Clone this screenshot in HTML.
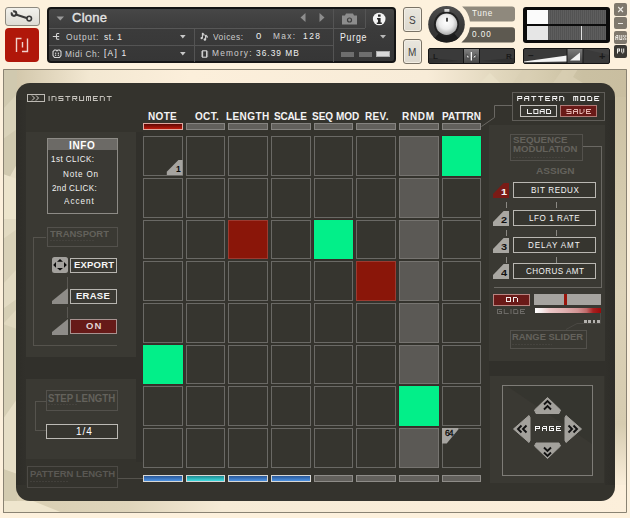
<!DOCTYPE html><html><head><meta charset="utf-8"><style>
*{margin:0;padding:0;box-sizing:border-box}
html,body{width:630px;height:518px;overflow:hidden;background:#fdf1dd;font-family:"Liberation Sans",sans-serif;position:relative}
.a{position:absolute}
.t{position:absolute;white-space:nowrap;line-height:1}
</style></head><body><div class="a" style="left:5px;top:7px;width:35px;height:19px;border:1px solid #8d897f;border-radius:3px;background:linear-gradient(#f2f1ec,#dedcd4)"></div>
<div class="a" style="left:5px;top:28px;width:34px;height:34px;border-radius:4px;background:#b0170a"></div>
<svg class="a" style="left:5px;top:6px" width="36" height="21"><path d="M10.8,8.4 L21.6,11.9" stroke="#3a3a3a" stroke-width="2.1" stroke-linecap="round"/><circle cx="9" cy="7.6" r="3.3" fill="#3a3a3a"/><circle cx="9" cy="7.6" r="1.2" fill="#e9e8e3"/><polygon points="9,7.6 5,5.6 7.2,3.2" fill="#e9e8e3"/><circle cx="24.2" cy="12.6" r="2.3" fill="none" stroke="#3a3a3a" stroke-width="1.6"/></svg>
<svg class="a" style="left:13px;top:36px" width="18" height="18"><path d="M3.5,16 V2.5 H8.5 M9.5,6 V11.5 M14.5,2.5 V15.5 H9" stroke="#f1d2cc" stroke-width="1.4" fill="none"/></svg>
<div class="a" style="left:47px;top:7px;width:349px;height:56px;background:linear-gradient(#474747,#3b3b3b 40%,#363636);border:2px solid #151515;border-radius:4px"></div>
<div class="a" style="left:49px;top:28px;width:316px;height:1px;background:#575757"></div>
<div class="a" style="left:49px;top:45px;width:284px;height:1px;background:#545454"></div>
<div class="a" style="left:194px;top:29px;width:1px;height:33px;background:#545454"></div>
<div class="a" style="left:333px;top:9px;width:1px;height:53px;background:#545454"></div>
<div class="a" style="left:365px;top:9px;width:1px;height:19px;background:#545454"></div>
<svg class="a" style="left:56px;top:16px" width="9" height="5"><polygon points="0.5,0.5 8,0.5 4.25,4.5" fill="#9a9a9a"/></svg>
<div class="t" style="left:72px;top:11px;font-family:'Liberation Sans';font-size:13px;font-weight:normal;letter-spacing:0.25px;color:#e4e4e4;-webkit-text-stroke:0.35px #e4e4e4">Clone</div>
<svg class="a" style="left:300px;top:13px" width="6" height="9"><polygon points="5.5,0 5.5,9 0.5,4.5" fill="#8d8d8d"/></svg>
<svg class="a" style="left:319px;top:13px" width="6" height="9"><polygon points="0.5,0 0.5,9 5.5,4.5" fill="#8d8d8d"/></svg>
<svg class="a" style="left:341px;top:12px" width="17" height="13"><path d="M5,1.5 h7 l1,2 h3 v9 h-15 v-9 h3 z" fill="#8c8c8c"/><circle cx="8.5" cy="8" r="2.6" fill="#3e3e3e"/><circle cx="8.5" cy="8" r="1.4" fill="#8c8c8c"/></svg>
<svg class="a" style="left:372px;top:12px" width="15" height="14"><circle cx="7.2" cy="7" r="6.3" fill="#f4f4f4"/><rect x="6" y="2.5" width="2.6" height="2.2" fill="#2a2a2a"/><path d="M5,6 h3.6 v4.6 h1.2 v1.4 h-5 v-1.4 h1.2 v-3.2 h-1 z" fill="#2a2a2a"/></svg>
<svg class="a" style="left:52px;top:32px" width="9" height="9"><path d="M0.8,4.5 H7.2 M7.2,1.5 H5.3 Q4.5,1.5 4.5,2.5 V6.3 Q4.5,7.3 5.3,7.3 H7.2" stroke="#d4d4d4" stroke-width="1.1" fill="none"/></svg>
<div class="t" style="left:66px;top:32px;font-family:'Liberation Sans';font-size:9.5px;font-weight:normal;letter-spacing:0.95px;color:#cdcdcd;transform-origin:0 0;transform:scaleX(0.88);">Output:</div>
<div class="t" style="left:104px;top:32px;font-family:'Liberation Sans';font-size:9.5px;font-weight:normal;letter-spacing:0.57px;color:#f0f0f0;transform-origin:0 0;transform:scaleX(0.88);">st. 1</div>
<svg class="a" style="left:180px;top:35px" width="7" height="5"><polygon points="0,0 5.6,0 2.8,3.4" fill="#c8c8c8"/></svg>
<svg class="a" style="left:52px;top:49px" width="10" height="10"><path d="M2.5,1 H4 L5,2 L6,1 H7.5 L9,2.5 V6.5 L7.5,8.5 H2.5 L1,6.5 V2.5 Z" stroke="#d4d4d4" stroke-width="1.1" fill="none"/><circle cx="3.6" cy="4.2" r="0.75" fill="#d4d4d4"/><circle cx="6.4" cy="4.2" r="0.75" fill="#d4d4d4"/><circle cx="3.6" cy="6.3" r="0.75" fill="#d4d4d4"/><circle cx="6.4" cy="6.3" r="0.75" fill="#d4d4d4"/></svg>
<div class="t" style="left:65px;top:49px;font-family:'Liberation Sans';font-size:9.5px;font-weight:normal;letter-spacing:0.65px;color:#cdcdcd;transform-origin:0 0;transform:scaleX(0.88);">Midi Ch:</div>
<div class="t" style="left:104px;top:48px;font-family:'Liberation Sans';font-size:9.5px;font-weight:normal;letter-spacing:1.42px;color:#f0f0f0;transform-origin:0 0;transform:scaleX(0.88);">[A] 1</div>
<svg class="a" style="left:180px;top:52px" width="7" height="5"><polygon points="0,0 5.6,0 2.8,3.4" fill="#c8c8c8"/></svg>
<svg class="a" style="left:200px;top:32px" width="10" height="10"><path d="M2.4,1 V6 M2.4,1 L4,2.6 V3.8 M5.6,3 V7.5 M5.6,3 L7.2,4.6 V5.8" stroke="#d4d4d4" stroke-width="1.1" fill="none"/><circle cx="1.7" cy="6.1" r="1.2" fill="#d4d4d4"/><circle cx="4.9" cy="7.5" r="1.2" fill="#d4d4d4"/></svg>
<div class="t" style="left:213px;top:32px;font-family:'Liberation Sans';font-size:9.5px;font-weight:normal;letter-spacing:0.57px;color:#cdcdcd;transform-origin:0 0;transform:scaleX(0.88);">Voices:</div>
<div class="t" style="left:256px;top:31px;font-family:'Liberation Sans';font-size:9.5px;font-weight:normal;letter-spacing:0px;color:#f0f0f0;">0</div>
<div class="t" style="left:273px;top:31px;font-family:'Liberation Sans';font-size:9.5px;font-weight:normal;letter-spacing:1.52px;color:#cdcdcd;transform-origin:0 0;transform:scaleX(0.88);">Max:</div>
<div class="t" style="left:303px;top:31px;font-family:'Liberation Sans';font-size:9.5px;font-weight:normal;letter-spacing:1.7px;color:#f0f0f0;transform-origin:0 0;transform:scaleX(0.88);">128</div>
<svg class="a" style="left:200px;top:49px" width="10" height="10"><rect x="2.6" y="1.8" width="4" height="6.4" stroke="#d4d4d4" stroke-width="1.1" fill="none"/><path d="M1,3 H2.6 M1,5 H2.6 M1,7 H2.6 M6.6,3 H8.2 M6.6,5 H8.2 M6.6,7 H8.2" stroke="#d4d4d4" stroke-width="1"/></svg>
<div class="t" style="left:212px;top:48px;font-family:'Liberation Sans';font-size:9.5px;font-weight:normal;letter-spacing:1.33px;color:#cdcdcd;transform-origin:0 0;transform:scaleX(0.88);">Memory:</div>
<div class="t" style="left:256px;top:48px;font-family:'Liberation Sans';font-size:9.5px;font-weight:normal;letter-spacing:1.14px;color:#f0f0f0;transform-origin:0 0;transform:scaleX(0.88);">36.39 MB</div>
<div class="t" style="left:340px;top:33px;font-family:'Liberation Sans';font-size:10px;font-weight:normal;letter-spacing:0.85px;color:#f0f0f0;transform-origin:0 0;transform:scaleX(0.88);">Purge</div>
<svg class="a" style="left:380px;top:35px" width="7" height="5"><polygon points="0,0 6,0 3,3.6" fill="#b8b8b8"/></svg>
<div class="a" style="left:341px;top:52px;width:13px;height:5px;background:#6e6e6e"></div>
<div class="a" style="left:359px;top:52px;width:13px;height:5px;background:#6e6e6e"></div>
<div class="a" style="left:376px;top:51px;width:14px;height:6px;background:#d8d8d8;border:1px solid #aaa"></div>
<div class="a" style="left:403px;top:7px;width:19px;height:25px;border:1px solid #7a7366;border-radius:3px;box-shadow:inset 0 0 0 1px #f4efe4;background:linear-gradient(#e9e6de,#dcd8ce)"></div>
<div class="t" style="left:409px;top:16px;font-family:'Liberation Sans';font-size:10px;font-weight:normal;letter-spacing:1.0px;color:#3e3e3e;">S</div>
<div class="a" style="left:403px;top:39px;width:19px;height:25px;border:1px solid #7a7366;border-radius:3px;box-shadow:inset 0 0 0 1px #f4efe4;background:linear-gradient(#e9e6de,#dcd8ce)"></div>
<div class="t" style="left:408px;top:48px;font-family:'Liberation Sans';font-size:10px;font-weight:normal;letter-spacing:1.0px;color:#3e3e3e;">M</div>
<svg class="a" style="left:427px;top:5px" width="40" height="40"><defs><radialGradient id="kg" cx="48%" cy="40%" r="60%"><stop offset="0" stop-color="#ffffff"/><stop offset="0.55" stop-color="#ececec"/><stop offset="1" stop-color="#a9a9a9"/></radialGradient><linearGradient id="kr" x1="0" y1="0" x2="0" y2="1"><stop offset="0" stop-color="#4e4e4e"/><stop offset="0.5" stop-color="#3a3a3a"/><stop offset="1" stop-color="#303030"/></linearGradient><linearGradient id="kh" x1="0" y1="0" x2="0" y2="1"><stop offset="0" stop-color="#f4f4f4"/><stop offset="1" stop-color="#bdbdbd"/></linearGradient></defs><circle cx="19.5" cy="19.2" r="18.3" fill="url(#kr)"/><path d="M19.5,19.2 L7.7,33.2 A18.3,18.3 0 0 0 31.3,33.2 Z" fill="#1c1c1c"/><circle cx="19.5" cy="19.2" r="12.6" fill="#222"/><circle cx="19.6" cy="19.3" r="10.7" fill="url(#kg)"/><rect x="17.4" y="4.1" width="5" height="2.8" fill="url(#kh)"/><rect x="19" y="12.8" width="2" height="3.8" fill="#4a4a4a"/></svg>
<svg class="a" style="left:460px;top:6px" width="56" height="37"><path d="M2.1,0.5 H52 Q55,0.5 55,3.5 V12.5 Q55,15.5 52,15.5 H9.95 A23.6,23.6 0 0 0 2.1,0.5 Z" fill="#8f897d"/><path d="M9.9,21.3 H52 Q55,21.3 55,24.3 V33.5 Q55,36.5 52,36.5 H1.4 A23.6,23.6 0 0 0 9.9,21.3 Z" fill="#5d5950"/></svg>
<div class="t" style="left:472px;top:8px;font-family:'Liberation Sans';font-size:9.6px;font-weight:normal;letter-spacing:0.78px;color:#f6f4ee;transform-origin:0 0;transform:scaleX(0.85);">Tune</div>
<div class="t" style="left:472px;top:29px;font-family:'Liberation Sans';font-size:9.6px;font-weight:normal;letter-spacing:1.18px;color:#f6f4ee;transform-origin:0 0;transform:scaleX(0.85);">0.00</div>
<div class="a" style="left:428px;top:48px;width:87px;height:16px;background:#3a3a3a;border:1px solid #151515;border-radius:2px"></div>
<svg class="a" style="left:429px;top:49px" width="85" height="14"><defs><linearGradient id="ph" x1="0" y1="0" x2="0" y2="1"><stop offset="0" stop-color="#808080"/><stop offset="1" stop-color="#474747"/></linearGradient></defs><polygon points="0,9 34,12 0,14" fill="#2c2c2c" opacity="0.7"/><polygon points="85,9 51,12 85,14" fill="#2c2c2c" opacity="0.7"/><rect x="34" y="0" width="17" height="14" fill="#151515"/><rect x="35" y="0" width="15" height="14" fill="url(#ph)"/><path d="M37.7,5.4 V8.8 H41.2 Z M46.8,5.4 V8.8 H43.3 Z" fill="#f4f4f4" stroke="#222" stroke-width="0.6"/><rect x="41.7" y="3" width="1.3" height="8.5" fill="#f4f4f4"/></svg>
<div class="t" style="left:433px;top:53px;font-size:8px;color:#1a1a1a;font-weight:bold">L</div>
<div class="t" style="left:506px;top:53px;font-size:8px;color:#1a1a1a;font-weight:bold">R</div>
<div class="a" style="left:523px;top:7px;width:87px;height:36px;background:#0c0c0c;border-radius:3px"></div>
<div class="a" style="left:527px;top:10px;width:79px;height:14px;background:repeating-linear-gradient(90deg,#5e5e5e 0 1px,#535353 1px 2px)"></div>
<div class="a" style="left:527px;top:26px;width:79px;height:14px;background:repeating-linear-gradient(90deg,#5e5e5e 0 1px,#535353 1px 2px)"></div>
<div class="a" style="left:527px;top:10px;width:21px;height:14px;background:#fbfbfb"></div>
<div class="a" style="left:527px;top:26px;width:21px;height:14px;background:#e6e6e6"></div>
<div class="a" style="left:581px;top:26px;width:1px;height:14px;background:#e0e0e0"></div>
<div class="a" style="left:523px;top:48px;width:87px;height:16px;background:#3a3a3a;border:1px solid #151515;border-radius:2px"></div>
<svg class="a" style="left:524px;top:49px" width="85" height="14"><defs><linearGradient id="vh" x1="0" y1="0" x2="0" y2="1"><stop offset="0" stop-color="#7c7c7c"/><stop offset="1" stop-color="#474747"/></linearGradient></defs><polygon points="0,12.5 43,6.5 43,12.5 0,13.2" fill="#f4f4f4"/><rect x="42.5" y="0" width="17" height="14" fill="#161616"/><rect x="43.5" y="0" width="15" height="14" fill="url(#vh)"/><polygon points="46,11.5 56,3.5 56,11.5" fill="#f2f2f2"/><polygon points="59.5,0 85,0 85,6" fill="#4a4a4a" opacity="0.5"/></svg>
<div class="t" style="left:528px;top:51px;font-size:10px;color:#1a1a1a;font-weight:bold">&#8211;</div>
<div class="t" style="left:599px;top:51px;font-size:11px;color:#1a1a1a;font-weight:bold">+</div>
<div class="a" style="left:614px;top:3px;width:13px;height:13px;background:#7f786c;border-radius:2px"><svg class="a" style="left:0;top:0" width="13" height="13"><path d="M4.2,4 L9,9 M9,4 L4.2,9" stroke="#ebe8e2" stroke-width="1.1"/></svg></div>
<div class="a" style="left:614px;top:17px;width:13px;height:12px;background:#7f786c;border-radius:2px"><div class="a" style="left:4px;top:6px;width:5px;height:1px;background:#ebe8e2"></div></div>
<div class="a" style="left:614px;top:31px;width:13px;height:13px;background:#7f786c;border-radius:2px"></div>
<svg class="a" style="left:0;top:0;overflow:visible" width="1" height="1"><path d="M616.30,35.00h2.00v1.00h-2.00zM615.30,36.00h1.00v1.00h-1.00zM617.30,36.00h1.00v1.00h-1.00zM615.30,37.00h3.00v1.00h-3.00zM615.30,38.00h1.00v1.00h-1.00zM617.30,38.00h1.00v1.00h-1.00zM615.30,39.00h1.00v1.00h-1.00zM617.30,39.00h1.00v1.00h-1.00zM619.30,35.00h1.00v1.00h-1.00zM621.30,35.00h1.00v1.00h-1.00zM619.30,36.00h1.00v1.00h-1.00zM621.30,36.00h1.00v1.00h-1.00zM619.30,37.00h1.00v1.00h-1.00zM621.30,37.00h1.00v1.00h-1.00zM619.30,38.00h1.00v1.00h-1.00zM621.30,38.00h1.00v1.00h-1.00zM619.30,39.00h3.00v1.00h-3.00zM623.30,35.00h1.00v1.00h-1.00zM625.30,35.00h1.00v1.00h-1.00zM623.30,36.00h1.00v1.00h-1.00zM625.30,36.00h1.00v1.00h-1.00zM624.30,37.00h1.00v1.00h-1.00zM623.30,38.00h1.00v1.00h-1.00zM625.30,38.00h1.00v1.00h-1.00zM623.30,39.00h1.00v1.00h-1.00zM625.30,39.00h1.00v1.00h-1.00z" fill="#ebe8e2" opacity="1.0"/></svg>
<div class="a" style="left:614px;top:45px;width:13px;height:13px;background:#3b3934;border-radius:2px"></div>
<svg class="a" style="left:0;top:0;overflow:visible" width="1" height="1"><path d="M617.00,48.50h3.00v1.00h-3.00zM617.00,49.50h1.00v1.00h-1.00zM619.00,49.50h1.00v1.00h-1.00zM617.00,50.50h3.00v1.00h-3.00zM617.00,51.50h1.00v1.00h-1.00zM617.00,52.50h1.00v1.00h-1.00zM621.20,48.50h1.00v1.00h-1.00zM623.20,48.50h1.00v1.00h-1.00zM621.20,49.50h1.00v1.00h-1.00zM623.20,49.50h1.00v1.00h-1.00zM621.20,50.50h1.00v1.00h-1.00zM623.20,50.50h1.00v1.00h-1.00zM621.20,51.50h1.00v1.00h-1.00zM623.20,51.50h1.00v1.00h-1.00zM622.20,52.50h1.00v1.00h-1.00z" fill="#f2f0ea" opacity="1.0"/></svg>
<svg class="a" style="left:3px;top:69px" width="624" height="444"><defs><linearGradient id="ft" x1="0" y1="0" x2="624" y2="0" gradientUnits="userSpaceOnUse"><stop offset="0" stop-color="#cdc2a5"/><stop offset="0.14" stop-color="#f3e8d2"/><stop offset="0.3" stop-color="#fcefdb"/><stop offset="0.68" stop-color="#f8ecd8"/><stop offset="0.8" stop-color="#e0d6bc"/><stop offset="0.88" stop-color="#d3c9ac"/><stop offset="0.93" stop-color="#cac0a2"/><stop offset="1" stop-color="#c9bea0"/></linearGradient><linearGradient id="fr" x1="0" y1="0" x2="0" y2="1"><stop offset="0" stop-color="#c9bea0"/><stop offset="0.25" stop-color="#d3c9ac"/><stop offset="0.5" stop-color="#dcd2b7"/><stop offset="0.8" stop-color="#d6ccb0"/><stop offset="0.93" stop-color="#f8ecd8"/><stop offset="1" stop-color="#fcefdb"/></linearGradient><linearGradient id="fb" x1="0" y1="0" x2="1" y2="0"><stop offset="0" stop-color="#d8ceb2"/><stop offset="0.2" stop-color="#dfd5bb"/><stop offset="0.35" stop-color="#f6ebd6"/><stop offset="1" stop-color="#fcefdb"/></linearGradient></defs><rect x="0" y="0" width="624" height="444" fill="#fcefdb"/><rect x="0" y="0" width="28" height="444" fill="#d6cfb6"/><rect x="596" y="0" width="28" height="444" fill="url(#fr)"/><rect x="0" y="0" width="624" height="28" fill="url(#ft)"/><rect x="0" y="416" width="624" height="28" fill="url(#fb)"/><polygon points="0,0 14,0 14,140 0,120" fill="#d0c9af"/><polygon points="0,40 14,25 14,60 0,70" fill="#d9d2b9"/><polygon points="0,120 14,95 14,150 0,160" fill="#e6dec6"/><polygon points="0,105 14,110 14,150 0,150" fill="#ece4cc"/><polygon points="0,150 14,150 14,230 0,240" fill="#e2dac2"/><polygon points="0,170 14,160 14,200 0,215" fill="#d9d1b8"/><polygon points="0,240 14,230 14,330 0,350" fill="#d6cfb5"/><polygon points="0,255 14,240 14,260" fill="#e0d8bf"/><polygon points="0,350 14,330 14,405 0,400" fill="#e6dec6"/><polygon points="0,400 14,405 14,432 0,432" fill="#d3cbb0"/><polygon points="0,432 30,432 60,444 0,444" fill="#efe6ce"/><polygon points="477,14 487,4 497,14" fill="#e9e0c7" opacity="0.8"/><polygon points="510,14 520,0 530,0 518,14" fill="#d9cfb4" opacity="0.7"/><polygon points="550,14 560,0 575,0 570,8 580,14" fill="#d8ceb3" opacity="0.8"/><path d="M0.5,444 V0.5 H623.5 V443.5 H0" stroke="#8a8373" stroke-width="1" fill="none"/></svg>
<div class="a" style="left:16px;top:83px;width:599px;height:418px;border-radius:14px;background:#34332d"></div>
<div class="a" style="left:16px;top:100px;width:10px;height:385px;background:linear-gradient(90deg,#2e2d28,#31302b)"></div>
<div class="a" style="left:605px;top:100px;width:10px;height:385px;background:linear-gradient(90deg,#31302b,#2e2d28)"></div>
<div class="a" style="left:26px;top:357px;width:110px;height:22px;background:#31302b"></div>
<div class="a" style="left:136px;top:132px;width:7px;height:330px;background:#31302b"></div>
<div class="a" style="left:489px;top:361px;width:116px;height:15px;background:#31302b"></div>
<div class="a" style="left:27px;top:94px;width:18px;height:8px;border:1px solid #bdbab4"></div>
<svg class="a" style="left:31px;top:95px" width="12" height="6"><path d="M1,0.5 L3.5,3 L1,5.5 M5,0.5 L7.5,3 L5,5.5" stroke="#d0cdc7" stroke-width="1" fill="none"/></svg>
<svg class="a" style="left:0;top:0;overflow:visible" width="1" height="1"><path d="M48.60,96.00h1.00v1.00h-1.00zM48.60,97.00h1.00v1.00h-1.00zM48.60,98.00h1.00v1.00h-1.00zM48.60,99.00h1.00v1.00h-1.00zM48.60,100.00h1.00v1.00h-1.00zM51.50,96.00h4.00v1.00h-4.00zM51.50,97.00h1.00v1.00h-1.00zM55.50,97.00h1.00v1.00h-1.00zM51.50,98.00h1.00v1.00h-1.00zM55.50,98.00h1.00v1.00h-1.00zM51.50,99.00h1.00v1.00h-1.00zM55.50,99.00h1.00v1.00h-1.00zM51.50,100.00h1.00v1.00h-1.00zM55.50,100.00h1.00v1.00h-1.00zM58.40,96.00h5.00v1.00h-5.00zM58.40,97.00h1.00v1.00h-1.00zM58.40,98.00h5.00v1.00h-5.00zM62.40,99.00h1.00v1.00h-1.00zM58.40,100.00h5.00v1.00h-5.00zM65.30,96.00h5.00v1.00h-5.00zM67.30,97.00h1.00v1.00h-1.00zM67.30,98.00h1.00v1.00h-1.00zM67.30,99.00h1.00v1.00h-1.00zM67.30,100.00h1.00v1.00h-1.00zM72.20,96.00h5.00v1.00h-5.00zM72.20,97.00h1.00v1.00h-1.00zM76.20,97.00h1.00v1.00h-1.00zM72.20,98.00h5.00v1.00h-5.00zM72.20,99.00h1.00v1.00h-1.00zM75.20,99.00h1.00v1.00h-1.00zM72.20,100.00h1.00v1.00h-1.00zM76.20,100.00h1.00v1.00h-1.00zM79.10,96.00h1.00v1.00h-1.00zM83.10,96.00h1.00v1.00h-1.00zM79.10,97.00h1.00v1.00h-1.00zM83.10,97.00h1.00v1.00h-1.00zM79.10,98.00h1.00v1.00h-1.00zM83.10,98.00h1.00v1.00h-1.00zM79.10,99.00h1.00v1.00h-1.00zM83.10,99.00h1.00v1.00h-1.00zM79.10,100.00h5.00v1.00h-5.00zM86.00,96.00h5.00v1.00h-5.00zM86.00,97.00h1.00v1.00h-1.00zM88.00,97.00h1.00v1.00h-1.00zM90.00,97.00h1.00v1.00h-1.00zM86.00,98.00h1.00v1.00h-1.00zM88.00,98.00h1.00v1.00h-1.00zM90.00,98.00h1.00v1.00h-1.00zM86.00,99.00h1.00v1.00h-1.00zM88.00,99.00h1.00v1.00h-1.00zM90.00,99.00h1.00v1.00h-1.00zM86.00,100.00h1.00v1.00h-1.00zM88.00,100.00h1.00v1.00h-1.00zM90.00,100.00h1.00v1.00h-1.00zM92.90,96.00h5.00v1.00h-5.00zM92.90,97.00h1.00v1.00h-1.00zM92.90,98.00h4.00v1.00h-4.00zM92.90,99.00h1.00v1.00h-1.00zM92.90,100.00h5.00v1.00h-5.00zM99.80,96.00h4.00v1.00h-4.00zM99.80,97.00h1.00v1.00h-1.00zM103.80,97.00h1.00v1.00h-1.00zM99.80,98.00h1.00v1.00h-1.00zM103.80,98.00h1.00v1.00h-1.00zM99.80,99.00h1.00v1.00h-1.00zM103.80,99.00h1.00v1.00h-1.00zM99.80,100.00h1.00v1.00h-1.00zM103.80,100.00h1.00v1.00h-1.00zM106.70,96.00h5.00v1.00h-5.00zM108.70,97.00h1.00v1.00h-1.00zM108.70,98.00h1.00v1.00h-1.00zM108.70,99.00h1.00v1.00h-1.00zM108.70,100.00h1.00v1.00h-1.00z" fill="#c4c1bb" opacity="1.0"/></svg>
<div class="a" style="left:26px;top:132px;width:110px;height:225px;background:#3a3933"></div>
<div class="a" style="left:26px;top:379px;width:110px;height:80px;background:#3a3933"></div>
<div class="a" style="left:47px;top:138px;width:71px;height:76px;border:1px solid #8d8b86;background:#3a3934"></div>
<div class="a" style="left:48px;top:139px;width:69px;height:11px;background:#6c6a66"></div>
<div class="t" style="left:69px;top:141px;font-family:'Liberation Sans';font-size:10px;font-weight:bold;letter-spacing:0.67px;color:#fff;">INFO</div>
<div class="t" style="left:51px;top:154px;font-family:'Liberation Sans';font-size:9.5px;font-weight:normal;letter-spacing:0.52px;color:#f2f2f2;transform-origin:0 0;transform:scaleX(0.85);">1st CLICK:</div>
<div class="t" style="left:63px;top:169px;font-family:'Liberation Sans';font-size:9.5px;font-weight:normal;letter-spacing:0.98px;color:#f2f2f2;transform-origin:0 0;transform:scaleX(0.85);">Note On</div>
<div class="t" style="left:52px;top:183px;font-family:'Liberation Sans';font-size:9.5px;font-weight:normal;letter-spacing:0.39px;color:#f2f2f2;transform-origin:0 0;transform:scaleX(0.85);">2nd CLICK:</div>
<div class="t" style="left:64px;top:196px;font-family:'Liberation Sans';font-size:9.5px;font-weight:normal;letter-spacing:1.18px;color:#f2f2f2;transform-origin:0 0;transform:scaleX(0.85);">Accent</div>
<div class="a" style="left:47px;top:227px;width:71px;height:20px;border:1px solid #53514c"></div>
<div class="t" style="left:50px;top:229px;font-family:'Liberation Sans';font-size:9.8px;font-weight:bold;letter-spacing:0px;color:#63615b;transform-origin:0 0;transform:scaleX(0.967);">TRANSPORT</div>
<div class="a" style="left:50px;top:240px;width:44px;height:1px;background:repeating-linear-gradient(90deg,#45433e 0 2px,transparent 2px 3px)"></div>
<div class="a" style="left:33px;top:237px;width:1px;height:109px;background:#55534d"></div>
<div class="a" style="left:33px;top:237px;width:13px;height:1px;background:#55534d"></div>
<div class="a" style="left:33px;top:345px;width:84px;height:1px;background:#55534d"></div>
<div class="a" style="left:52px;top:257px;width:16px;height:16px;background:#a3a19d;border-radius:2.5px"><svg class="a" style="left:0;top:0" width="16" height="16"><polygon points="8,2 11,4.8 5,4.8" fill="#0a0a0a"/><polygon points="8,13.6 11,10.9 5,10.9" fill="#0a0a0a"/><polygon points="1.2,7.9 4,5 4,10.8" fill="#0a0a0a"/><polygon points="14.8,7.9 12,5 12,10.8" fill="#0a0a0a"/></svg></div>
<div class="a" style="left:70px;top:258px;width:47px;height:15px;border:1px solid #b7b5b0"></div>
<div class="t" style="left:74px;top:260px;font-family:'Liberation Sans';font-size:9.5px;font-weight:bold;letter-spacing:0.2px;color:#f6f6f6;">EXPORT</div>
<div class="a" style="left:67px;top:277px;width:1px;height:11px;background:#5a5853"></div>
<svg class="a" style="left:52px;top:288px" width="16" height="16"><polygon points="16,0 16,16 0,16 0,13" fill="#8e8c88"/></svg>
<div class="a" style="left:70px;top:289px;width:47px;height:15px;border:1px solid #b7b5b0"></div>
<div class="t" style="left:76px;top:291px;font-family:'Liberation Sans';font-size:9.5px;font-weight:bold;letter-spacing:0.25px;color:#f6f6f6;">ERASE</div>
<div class="a" style="left:67px;top:307px;width:1px;height:11px;background:#5a5853"></div>
<svg class="a" style="left:52px;top:319px" width="16" height="16"><polygon points="16,0 16,16 0,16 0,13" fill="#8e8c88"/></svg>
<div class="a" style="left:70px;top:319px;width:47px;height:15px;border:1px solid #a89290;background:#661a18"></div>
<div class="t" style="left:86px;top:321px;font-family:'Liberation Sans';font-size:9.5px;font-weight:bold;letter-spacing:1.0px;color:#e0d4d2;">ON</div>
<div class="a" style="left:46px;top:390px;width:72px;height:21px;border:1px solid #53514c"></div>
<div class="t" style="left:48px;top:394px;font-family:'Liberation Sans';font-size:10.2px;font-weight:bold;letter-spacing:0px;color:#64625c;transform-origin:0 0;transform:scaleX(0.944);">STEP LENGTH</div>
<div class="a" style="left:48px;top:404px;width:30px;height:1px;background:repeating-linear-gradient(90deg,#45433e 0 2px,transparent 2px 3px)"></div>
<div class="a" style="left:35px;top:401px;width:1px;height:30px;background:#55534d"></div>
<div class="a" style="left:35px;top:401px;width:11px;height:1px;background:#55534d"></div>
<div class="a" style="left:35px;top:430px;width:11px;height:1px;background:#55534d"></div>
<div class="a" style="left:46px;top:424px;width:72px;height:15px;border:1px solid #bcbab5;background:#36352f"></div>
<div class="t" style="left:76px;top:427px;font-family:'Liberation Sans';font-size:10px;font-weight:normal;letter-spacing:1.0px;color:#fff;">1/4</div>
<div class="a" style="left:27px;top:466px;width:91px;height:22px;border:1px solid #4c4a45"></div>
<div class="t" style="left:30px;top:469px;font-family:'Liberation Sans';font-size:9.5px;font-weight:bold;letter-spacing:0px;color:#5a5853;">PATTERN LENGTH</div>
<div class="a" style="left:30px;top:481px;width:39px;height:1px;background:repeating-linear-gradient(90deg,#42403b 0 2px,transparent 2px 3px)"></div>
<div class="a" style="left:118px;top:478px;width:25px;height:1px;background:#55534d"></div>
<div class="a" style="left:143px;top:123px;width:40px;height:7px;border:1px solid #e0a8a0;background:linear-gradient(#5e0805,#c01a0c)"></div>
<div class="a" style="left:143px;top:475px;width:40px;height:7px;border:1px solid #d8d8d6;background:linear-gradient(#2a5898,#4d92e2)"></div>
<div class="a" style="left:186px;top:123px;width:39px;height:7px;border:1px solid #858380;background:#62605c"></div>
<div class="a" style="left:186px;top:475px;width:39px;height:7px;border:1px solid #d8d8d6;background:linear-gradient(#1f8a92,#40dde0)"></div>
<div class="a" style="left:228px;top:123px;width:40px;height:7px;border:1px solid #858380;background:#62605c"></div>
<div class="a" style="left:228px;top:475px;width:40px;height:7px;border:1px solid #d8d8d6;background:linear-gradient(#2a5898,#4d92e2)"></div>
<div class="a" style="left:271px;top:123px;width:40px;height:7px;border:1px solid #858380;background:#62605c"></div>
<div class="a" style="left:271px;top:475px;width:40px;height:7px;border:1px solid #d8d8d6;background:linear-gradient(#2a5898,#4d92e2)"></div>
<div class="a" style="left:314px;top:123px;width:39px;height:7px;border:1px solid #858380;background:#62605c"></div>
<div class="a" style="left:314px;top:475px;width:39px;height:7px;border:1px solid #8e8c88;background:#62605c"></div>
<div class="a" style="left:356px;top:123px;width:40px;height:7px;border:1px solid #858380;background:#62605c"></div>
<div class="a" style="left:356px;top:475px;width:40px;height:7px;border:1px solid #8e8c88;background:#62605c"></div>
<div class="a" style="left:399px;top:123px;width:40px;height:7px;border:1px solid #858380;background:#62605c"></div>
<div class="a" style="left:399px;top:475px;width:40px;height:7px;border:1px solid #8e8c88;background:#62605c"></div>
<div class="a" style="left:442px;top:123px;width:39px;height:7px;border:1px solid #858380;background:#62605c"></div>
<div class="a" style="left:442px;top:475px;width:39px;height:7px;border:1px solid #8e8c88;background:#62605c"></div>
<div class="a" style="left:143px;top:136px;width:40px;height:40px;border:1px solid #6a6965;background:#36352f"></div>
<div class="a" style="left:143px;top:178px;width:40px;height:40px;border:1px solid #6a6965;background:#36352f"></div>
<div class="a" style="left:143px;top:220px;width:40px;height:39px;border:1px solid #6a6965;background:#36352f"></div>
<div class="a" style="left:143px;top:261px;width:40px;height:40px;border:1px solid #6a6965;background:#36352f"></div>
<div class="a" style="left:143px;top:303px;width:40px;height:40px;border:1px solid #6a6965;background:#36352f"></div>
<div class="a" style="left:143px;top:345px;width:40px;height:39px;background:#02ef89;box-shadow:0 0 0 1px #3a2a28"></div>
<div class="a" style="left:143px;top:386px;width:40px;height:40px;border:1px solid #6a6965;background:#36352f"></div>
<div class="a" style="left:143px;top:428px;width:40px;height:40px;border:1px solid #6a6965;background:#36352f"></div>
<div class="a" style="left:186px;top:136px;width:39px;height:40px;border:1px solid #6a6965;background:#36352f"></div>
<div class="a" style="left:186px;top:178px;width:39px;height:40px;border:1px solid #6a6965;background:#36352f"></div>
<div class="a" style="left:186px;top:220px;width:39px;height:39px;border:1px solid #6a6965;background:#36352f"></div>
<div class="a" style="left:186px;top:261px;width:39px;height:40px;border:1px solid #6a6965;background:#36352f"></div>
<div class="a" style="left:186px;top:303px;width:39px;height:40px;border:1px solid #6a6965;background:#36352f"></div>
<div class="a" style="left:186px;top:345px;width:39px;height:39px;border:1px solid #6a6965;background:#36352f"></div>
<div class="a" style="left:186px;top:386px;width:39px;height:40px;border:1px solid #6a6965;background:#36352f"></div>
<div class="a" style="left:186px;top:428px;width:39px;height:40px;border:1px solid #6a6965;background:#36352f"></div>
<div class="a" style="left:228px;top:136px;width:40px;height:40px;border:1px solid #6a6965;background:#36352f"></div>
<div class="a" style="left:228px;top:178px;width:40px;height:40px;border:1px solid #6a6965;background:#36352f"></div>
<div class="a" style="left:228px;top:220px;width:40px;height:39px;background:#8a1609;border:1px solid #9c3a30"></div>
<div class="a" style="left:228px;top:261px;width:40px;height:40px;border:1px solid #6a6965;background:#36352f"></div>
<div class="a" style="left:228px;top:303px;width:40px;height:40px;border:1px solid #6a6965;background:#36352f"></div>
<div class="a" style="left:228px;top:345px;width:40px;height:39px;border:1px solid #6a6965;background:#36352f"></div>
<div class="a" style="left:228px;top:386px;width:40px;height:40px;border:1px solid #6a6965;background:#36352f"></div>
<div class="a" style="left:228px;top:428px;width:40px;height:40px;border:1px solid #6a6965;background:#36352f"></div>
<div class="a" style="left:271px;top:136px;width:40px;height:40px;border:1px solid #6a6965;background:#36352f"></div>
<div class="a" style="left:271px;top:178px;width:40px;height:40px;border:1px solid #6a6965;background:#36352f"></div>
<div class="a" style="left:271px;top:220px;width:40px;height:39px;border:1px solid #6a6965;background:#36352f"></div>
<div class="a" style="left:271px;top:261px;width:40px;height:40px;border:1px solid #6a6965;background:#36352f"></div>
<div class="a" style="left:271px;top:303px;width:40px;height:40px;border:1px solid #6a6965;background:#36352f"></div>
<div class="a" style="left:271px;top:345px;width:40px;height:39px;border:1px solid #6a6965;background:#36352f"></div>
<div class="a" style="left:271px;top:386px;width:40px;height:40px;border:1px solid #6a6965;background:#36352f"></div>
<div class="a" style="left:271px;top:428px;width:40px;height:40px;border:1px solid #6a6965;background:#36352f"></div>
<div class="a" style="left:314px;top:136px;width:39px;height:40px;border:1px solid #6a6965;background:#36352f"></div>
<div class="a" style="left:314px;top:178px;width:39px;height:40px;border:1px solid #6a6965;background:#36352f"></div>
<div class="a" style="left:314px;top:220px;width:39px;height:39px;background:#02ef89;box-shadow:0 0 0 1px #3a2a28"></div>
<div class="a" style="left:314px;top:261px;width:39px;height:40px;border:1px solid #6a6965;background:#36352f"></div>
<div class="a" style="left:314px;top:303px;width:39px;height:40px;border:1px solid #6a6965;background:#36352f"></div>
<div class="a" style="left:314px;top:345px;width:39px;height:39px;border:1px solid #6a6965;background:#36352f"></div>
<div class="a" style="left:314px;top:386px;width:39px;height:40px;border:1px solid #6a6965;background:#36352f"></div>
<div class="a" style="left:314px;top:428px;width:39px;height:40px;border:1px solid #6a6965;background:#36352f"></div>
<div class="a" style="left:356px;top:136px;width:40px;height:40px;border:1px solid #6a6965;background:#36352f"></div>
<div class="a" style="left:356px;top:178px;width:40px;height:40px;border:1px solid #6a6965;background:#36352f"></div>
<div class="a" style="left:356px;top:220px;width:40px;height:39px;border:1px solid #6a6965;background:#36352f"></div>
<div class="a" style="left:356px;top:261px;width:40px;height:40px;background:#8a1609;border:1px solid #9c3a30"></div>
<div class="a" style="left:356px;top:303px;width:40px;height:40px;border:1px solid #6a6965;background:#36352f"></div>
<div class="a" style="left:356px;top:345px;width:40px;height:39px;border:1px solid #6a6965;background:#36352f"></div>
<div class="a" style="left:356px;top:386px;width:40px;height:40px;border:1px solid #6a6965;background:#36352f"></div>
<div class="a" style="left:356px;top:428px;width:40px;height:40px;border:1px solid #6a6965;background:#36352f"></div>
<div class="a" style="left:399px;top:136px;width:40px;height:40px;background:#5b5955;border:1px solid #767470"></div>
<div class="a" style="left:399px;top:178px;width:40px;height:40px;background:#5b5955;border:1px solid #767470"></div>
<div class="a" style="left:399px;top:220px;width:40px;height:39px;background:#5b5955;border:1px solid #767470"></div>
<div class="a" style="left:399px;top:261px;width:40px;height:40px;background:#5b5955;border:1px solid #767470"></div>
<div class="a" style="left:399px;top:303px;width:40px;height:40px;background:#5b5955;border:1px solid #767470"></div>
<div class="a" style="left:399px;top:345px;width:40px;height:39px;background:#5b5955;border:1px solid #767470"></div>
<div class="a" style="left:399px;top:386px;width:40px;height:40px;background:#02ef89;box-shadow:0 0 0 1px #3a2a28"></div>
<div class="a" style="left:399px;top:428px;width:40px;height:40px;background:#5b5955;border:1px solid #767470"></div>
<div class="a" style="left:442px;top:136px;width:39px;height:40px;background:#02ef89;box-shadow:0 0 0 1px #3a2a28"></div>
<div class="a" style="left:442px;top:178px;width:39px;height:40px;border:1px solid #6a6965;background:#36352f"></div>
<div class="a" style="left:442px;top:220px;width:39px;height:39px;border:1px solid #6a6965;background:#36352f"></div>
<div class="a" style="left:442px;top:261px;width:39px;height:40px;border:1px solid #6a6965;background:#36352f"></div>
<div class="a" style="left:442px;top:303px;width:39px;height:40px;border:1px solid #6a6965;background:#36352f"></div>
<div class="a" style="left:442px;top:345px;width:39px;height:39px;border:1px solid #6a6965;background:#36352f"></div>
<div class="a" style="left:442px;top:386px;width:39px;height:40px;border:1px solid #6a6965;background:#36352f"></div>
<div class="a" style="left:442px;top:428px;width:39px;height:40px;border:1px solid #6a6965;background:#36352f"></div>
<div class="t" style="left:148px;top:112px;font-family:'Liberation Sans';font-size:10px;font-weight:bold;letter-spacing:0.33px;color:#f4f4f4;">NOTE</div>
<div class="t" style="left:195px;top:112px;font-family:'Liberation Sans';font-size:10px;font-weight:bold;letter-spacing:0.33px;color:#f4f4f4;">OCT.</div>
<div class="t" style="left:226px;top:112px;font-family:'Liberation Sans';font-size:10px;font-weight:bold;letter-spacing:0.4px;color:#f4f4f4;">LENGTH</div>
<div class="t" style="left:274px;top:112px;font-family:'Liberation Sans';font-size:10px;font-weight:bold;letter-spacing:-0.25px;color:#f4f4f4;">SCALE</div>
<div class="t" style="left:312px;top:112px;font-family:'Liberation Sans';font-size:10px;font-weight:bold;letter-spacing:0.0px;color:#f4f4f4;">SEQ MOD</div>
<div class="t" style="left:365px;top:112px;font-family:'Liberation Sans';font-size:10px;font-weight:bold;letter-spacing:0.33px;color:#f4f4f4;">REV.</div>
<div class="t" style="left:402px;top:112px;font-family:'Liberation Sans';font-size:10px;font-weight:bold;letter-spacing:0.67px;color:#f4f4f4;">RNDM</div>
<div class="t" style="left:442px;top:112px;font-family:'Liberation Sans';font-size:10px;font-weight:bold;letter-spacing:0.0px;color:#f4f4f4;">PATTRN</div>
<div class="a" style="left:512px;top:92px;width:93px;height:29px;border:1px solid #5f5d58"></div>
<div class="a" style="left:481px;top:123px;width:14px;height:1px;background:transparent"></div>
<svg class="a" style="left:480px;top:104px" width="33" height="24"><path d="M1.5,22.5 L14.5,13.5 V1.5 H32" stroke="#6a6863" stroke-width="1" fill="none"/></svg>
<svg class="a" style="left:0;top:0;overflow:visible" width="1" height="1"><path d="M517.20,96.00h5.00v1.00h-5.00zM517.20,97.00h1.00v1.00h-1.00zM521.20,97.00h1.00v1.00h-1.00zM517.20,98.00h5.00v1.00h-5.00zM517.20,99.00h1.00v1.00h-1.00zM517.20,100.00h1.00v1.00h-1.00zM525.20,96.00h4.00v1.00h-4.00zM524.20,97.00h1.00v1.00h-1.00zM528.20,97.00h1.00v1.00h-1.00zM524.20,98.00h5.00v1.00h-5.00zM524.20,99.00h1.00v1.00h-1.00zM528.20,99.00h1.00v1.00h-1.00zM524.20,100.00h1.00v1.00h-1.00zM528.20,100.00h1.00v1.00h-1.00zM531.20,96.00h5.00v1.00h-5.00zM533.20,97.00h1.00v1.00h-1.00zM533.20,98.00h1.00v1.00h-1.00zM533.20,99.00h1.00v1.00h-1.00zM533.20,100.00h1.00v1.00h-1.00zM538.20,96.00h5.00v1.00h-5.00zM540.20,97.00h1.00v1.00h-1.00zM540.20,98.00h1.00v1.00h-1.00zM540.20,99.00h1.00v1.00h-1.00zM540.20,100.00h1.00v1.00h-1.00zM545.20,96.00h5.00v1.00h-5.00zM545.20,97.00h1.00v1.00h-1.00zM545.20,98.00h4.00v1.00h-4.00zM545.20,99.00h1.00v1.00h-1.00zM545.20,100.00h5.00v1.00h-5.00zM552.20,96.00h5.00v1.00h-5.00zM552.20,97.00h1.00v1.00h-1.00zM556.20,97.00h1.00v1.00h-1.00zM552.20,98.00h5.00v1.00h-5.00zM552.20,99.00h1.00v1.00h-1.00zM555.20,99.00h1.00v1.00h-1.00zM552.20,100.00h1.00v1.00h-1.00zM556.20,100.00h1.00v1.00h-1.00zM559.20,96.00h4.00v1.00h-4.00zM559.20,97.00h1.00v1.00h-1.00zM563.20,97.00h1.00v1.00h-1.00zM559.20,98.00h1.00v1.00h-1.00zM563.20,98.00h1.00v1.00h-1.00zM559.20,99.00h1.00v1.00h-1.00zM563.20,99.00h1.00v1.00h-1.00zM559.20,100.00h1.00v1.00h-1.00zM563.20,100.00h1.00v1.00h-1.00zM573.20,96.00h5.00v1.00h-5.00zM573.20,97.00h1.00v1.00h-1.00zM575.20,97.00h1.00v1.00h-1.00zM577.20,97.00h1.00v1.00h-1.00zM573.20,98.00h1.00v1.00h-1.00zM575.20,98.00h1.00v1.00h-1.00zM577.20,98.00h1.00v1.00h-1.00zM573.20,99.00h1.00v1.00h-1.00zM575.20,99.00h1.00v1.00h-1.00zM577.20,99.00h1.00v1.00h-1.00zM573.20,100.00h1.00v1.00h-1.00zM575.20,100.00h1.00v1.00h-1.00zM577.20,100.00h1.00v1.00h-1.00zM580.20,96.00h5.00v1.00h-5.00zM580.20,97.00h1.00v1.00h-1.00zM584.20,97.00h1.00v1.00h-1.00zM580.20,98.00h1.00v1.00h-1.00zM584.20,98.00h1.00v1.00h-1.00zM580.20,99.00h1.00v1.00h-1.00zM584.20,99.00h1.00v1.00h-1.00zM580.20,100.00h5.00v1.00h-5.00zM587.20,96.00h4.00v1.00h-4.00zM587.20,97.00h1.00v1.00h-1.00zM591.20,97.00h1.00v1.00h-1.00zM587.20,98.00h1.00v1.00h-1.00zM591.20,98.00h1.00v1.00h-1.00zM587.20,99.00h1.00v1.00h-1.00zM591.20,99.00h1.00v1.00h-1.00zM587.20,100.00h5.00v1.00h-5.00zM594.20,96.00h5.00v1.00h-5.00zM594.20,97.00h1.00v1.00h-1.00zM594.20,98.00h4.00v1.00h-4.00zM594.20,99.00h1.00v1.00h-1.00zM594.20,100.00h5.00v1.00h-5.00z" fill="#f2f2f2" opacity="1.0"/></svg>
<div class="a" style="left:520px;top:105px;width:37px;height:12px;border:1px solid #c2c0bb;background:#36352f"></div>
<svg class="a" style="left:0;top:0;overflow:visible" width="1" height="1"><path d="M527.00,109.00h1.00v1.00h-1.00zM527.00,110.00h1.00v1.00h-1.00zM527.00,111.00h1.00v1.00h-1.00zM527.00,112.00h1.00v1.00h-1.00zM527.00,113.00h5.00v1.00h-5.00zM533.35,109.00h5.00v1.00h-5.00zM533.35,110.00h1.00v1.00h-1.00zM537.35,110.00h1.00v1.00h-1.00zM533.35,111.00h1.00v1.00h-1.00zM537.35,111.00h1.00v1.00h-1.00zM533.35,112.00h1.00v1.00h-1.00zM537.35,112.00h1.00v1.00h-1.00zM533.35,113.00h5.00v1.00h-5.00zM540.70,109.00h4.00v1.00h-4.00zM539.70,110.00h1.00v1.00h-1.00zM543.70,110.00h1.00v1.00h-1.00zM539.70,111.00h5.00v1.00h-5.00zM539.70,112.00h1.00v1.00h-1.00zM543.70,112.00h1.00v1.00h-1.00zM539.70,113.00h1.00v1.00h-1.00zM543.70,113.00h1.00v1.00h-1.00zM546.05,109.00h4.00v1.00h-4.00zM546.05,110.00h1.00v1.00h-1.00zM550.05,110.00h1.00v1.00h-1.00zM546.05,111.00h1.00v1.00h-1.00zM550.05,111.00h1.00v1.00h-1.00zM546.05,112.00h1.00v1.00h-1.00zM550.05,112.00h1.00v1.00h-1.00zM546.05,113.00h5.00v1.00h-5.00z" fill="#f2f2f2" opacity="1.0"/></svg>
<div class="a" style="left:560px;top:105px;width:37px;height:12px;border:1px solid #b07a76;background:#6a1a18"></div>
<svg class="a" style="left:0;top:0;overflow:visible" width="1" height="1"><path d="M566.50,109.00h5.00v1.00h-5.00zM566.50,110.00h1.00v1.00h-1.00zM566.50,111.00h5.00v1.00h-5.00zM570.50,112.00h1.00v1.00h-1.00zM566.50,113.00h5.00v1.00h-5.00zM574.00,109.00h4.00v1.00h-4.00zM573.00,110.00h1.00v1.00h-1.00zM577.00,110.00h1.00v1.00h-1.00zM573.00,111.00h5.00v1.00h-5.00zM573.00,112.00h1.00v1.00h-1.00zM577.00,112.00h1.00v1.00h-1.00zM573.00,113.00h1.00v1.00h-1.00zM577.00,113.00h1.00v1.00h-1.00zM579.50,109.00h1.00v1.00h-1.00zM583.50,109.00h1.00v1.00h-1.00zM579.50,110.00h1.00v1.00h-1.00zM583.50,110.00h1.00v1.00h-1.00zM579.50,111.00h1.00v1.00h-1.00zM583.50,111.00h1.00v1.00h-1.00zM579.50,112.00h1.00v1.00h-1.00zM582.50,112.00h1.00v1.00h-1.00zM579.50,113.00h3.00v1.00h-3.00zM586.00,109.00h5.00v1.00h-5.00zM586.00,110.00h1.00v1.00h-1.00zM586.00,111.00h4.00v1.00h-4.00zM586.00,112.00h1.00v1.00h-1.00zM586.00,113.00h5.00v1.00h-5.00z" fill="#e6b4b0" opacity="1.0"/></svg>
<div class="a" style="left:489px;top:125px;width:116px;height:236px;background:#3a3933"></div>
<div class="a" style="left:510px;top:134px;width:73px;height:27px;border:1px solid #53514c"></div>
<div class="t" style="left:513px;top:136px;font-family:'Liberation Sans';font-size:9px;font-weight:bold;letter-spacing:0px;color:#64625c;transform-origin:0 0;transform:scaleX(1.08);">SEQUENCE</div>
<div class="t" style="left:513px;top:145px;font-family:'Liberation Sans';font-size:9px;font-weight:bold;letter-spacing:0px;color:#64625c;transform-origin:0 0;transform:scaleX(1.067);">MODULATION</div>
<div class="a" style="left:513px;top:157px;width:52px;height:1px;background:repeating-linear-gradient(90deg,#45433e 0 2px,transparent 2px 3px)"></div>
<div class="a" style="left:583px;top:146px;width:19px;height:1px;background:#6a6863"></div>
<div class="a" style="left:601px;top:146px;width:1px;height:142px;background:#6a6863"></div>
<div class="a" style="left:494px;top:287px;width:108px;height:1px;background:#6a6863"></div>
<div class="t" style="left:536px;top:166px;font-family:'Liberation Sans';font-size:9.8px;font-weight:bold;letter-spacing:0px;color:#64625c;transform-origin:0 0;transform:scaleX(1.027);">ASSIGN</div>
<svg class="a" style="left:493px;top:183px" width="16" height="15"><polygon points="16,0 16,15 0,15 0,11 10.6,0" fill="#7a1b16"/></svg>
<div class="t" style="left:500.5px;top:187px;font-family:'Liberation Sans';font-size:9.5px;font-weight:bold;letter-spacing:0.0px;color:#f4f4f4;transform-origin:0 0;transform:scaleX(1.15);">1</div>
<div class="a" style="left:513px;top:182px;width:83px;height:16px;border:1px solid #b9b7b2;background:#36352f"></div>
<div class="t" style="left:531px;top:185px;font-family:'Liberation Sans';font-size:9.5px;font-weight:normal;letter-spacing:0.74px;color:#f4f4f4;transform-origin:0 0;transform:scaleX(0.85);">BIT REDUX</div>
<div class="a" style="left:506px;top:202px;width:1px;height:6px;background:#8a8883"></div>
<div class="a" style="left:556px;top:202px;width:1px;height:6px;background:#8a8883"></div>
<svg class="a" style="left:493px;top:211px" width="16" height="15"><polygon points="16,0 16,15 0,15 0,11 10.6,0" fill="#a9a7a2"/></svg>
<div class="t" style="left:501px;top:215px;font-family:'Liberation Sans';font-size:9.5px;font-weight:bold;letter-spacing:0.0px;color:#111;transform-origin:0 0;transform:scaleX(1.15);">2</div>
<div class="a" style="left:513px;top:210px;width:83px;height:16px;border:1px solid #b9b7b2;background:#36352f"></div>
<div class="t" style="left:529px;top:213px;font-family:'Liberation Sans';font-size:9.5px;font-weight:normal;letter-spacing:0.65px;color:#f4f4f4;transform-origin:0 0;transform:scaleX(0.85);">LFO 1 RATE</div>
<div class="a" style="left:506px;top:230px;width:1px;height:6px;background:#8a8883"></div>
<div class="a" style="left:556px;top:230px;width:1px;height:6px;background:#8a8883"></div>
<svg class="a" style="left:493px;top:238px" width="16" height="15"><polygon points="16,0 16,15 0,15 0,11 10.6,0" fill="#a9a7a2"/></svg>
<div class="t" style="left:501px;top:242px;font-family:'Liberation Sans';font-size:9.5px;font-weight:bold;letter-spacing:0.0px;color:#111;transform-origin:0 0;transform:scaleX(1.15);">3</div>
<div class="a" style="left:513px;top:237px;width:83px;height:16px;border:1px solid #b9b7b2;background:#36352f"></div>
<div class="t" style="left:528px;top:240px;font-family:'Liberation Sans';font-size:9.5px;font-weight:normal;letter-spacing:1.03px;color:#f4f4f4;transform-origin:0 0;transform:scaleX(0.85);">DELAY AMT</div>
<div class="a" style="left:506px;top:257px;width:1px;height:6px;background:#8a8883"></div>
<div class="a" style="left:556px;top:257px;width:1px;height:6px;background:#8a8883"></div>
<svg class="a" style="left:493px;top:264px" width="16" height="15"><polygon points="16,0 16,15 0,15 0,11 10.6,0" fill="#a9a7a2"/></svg>
<div class="t" style="left:501px;top:268px;font-family:'Liberation Sans';font-size:9.5px;font-weight:bold;letter-spacing:0.0px;color:#111;transform-origin:0 0;transform:scaleX(1.15);">4</div>
<div class="a" style="left:513px;top:263px;width:83px;height:16px;border:1px solid #b9b7b2;background:#36352f"></div>
<div class="t" style="left:526px;top:266px;font-family:'Liberation Sans';font-size:9.5px;font-weight:normal;letter-spacing:0.52px;color:#f4f4f4;transform-origin:0 0;transform:scaleX(0.85);">CHORUS AMT</div>
<div class="a" style="left:493px;top:294px;width:37px;height:12px;border:1px solid #b88480;background:#6a1a18"></div>
<svg class="a" style="left:0;top:0;overflow:visible" width="1" height="1"><path d="M506.00,297.00h5.00v1.00h-5.00zM506.00,298.00h1.00v1.00h-1.00zM510.00,298.00h1.00v1.00h-1.00zM506.00,299.00h1.00v1.00h-1.00zM510.00,299.00h1.00v1.00h-1.00zM506.00,300.00h1.00v1.00h-1.00zM510.00,300.00h1.00v1.00h-1.00zM506.00,301.00h5.00v1.00h-5.00zM513.00,297.00h4.00v1.00h-4.00zM513.00,298.00h1.00v1.00h-1.00zM517.00,298.00h1.00v1.00h-1.00zM513.00,299.00h1.00v1.00h-1.00zM517.00,299.00h1.00v1.00h-1.00zM513.00,300.00h1.00v1.00h-1.00zM517.00,300.00h1.00v1.00h-1.00zM513.00,301.00h1.00v1.00h-1.00zM517.00,301.00h1.00v1.00h-1.00z" fill="#f4eceb" opacity="1.0"/></svg>
<svg class="a" style="left:0;top:0;overflow:visible" width="1" height="1"><path d="M497.00,309.00h5.00v1.00h-5.00zM497.00,310.00h1.00v1.00h-1.00zM497.00,311.00h1.00v1.00h-1.00zM499.00,311.00h3.00v1.00h-3.00zM497.00,312.00h1.00v1.00h-1.00zM501.00,312.00h1.00v1.00h-1.00zM497.00,313.00h5.00v1.00h-5.00zM503.75,309.00h1.00v1.00h-1.00zM503.75,310.00h1.00v1.00h-1.00zM503.75,311.00h1.00v1.00h-1.00zM503.75,312.00h1.00v1.00h-1.00zM503.75,313.00h5.00v1.00h-5.00zM510.50,309.00h1.00v1.00h-1.00zM510.50,310.00h1.00v1.00h-1.00zM510.50,311.00h1.00v1.00h-1.00zM510.50,312.00h1.00v1.00h-1.00zM510.50,313.00h1.00v1.00h-1.00zM513.25,309.00h4.00v1.00h-4.00zM513.25,310.00h1.00v1.00h-1.00zM517.25,310.00h1.00v1.00h-1.00zM513.25,311.00h1.00v1.00h-1.00zM517.25,311.00h1.00v1.00h-1.00zM513.25,312.00h1.00v1.00h-1.00zM517.25,312.00h1.00v1.00h-1.00zM513.25,313.00h5.00v1.00h-5.00zM520.00,309.00h5.00v1.00h-5.00zM520.00,310.00h1.00v1.00h-1.00zM520.00,311.00h4.00v1.00h-4.00zM520.00,312.00h1.00v1.00h-1.00zM520.00,313.00h5.00v1.00h-5.00z" fill="#6c6a66" opacity="1.0"/></svg>
<div class="a" style="left:534px;top:294px;width:67px;height:11px;background:#a6a4a0"></div>
<div class="a" style="left:564px;top:294px;width:3px;height:11px;background:#9a150c"></div>
<div class="a" style="left:535px;top:308px;width:66px;height:5px;background:linear-gradient(90deg,#ffffff 0%,#f6ecec 10%,#ecc8c8 22%,#dfb0b0 45%,#d29494 65%,#c06a6a 78%,#a82020 88%,#9c0a0a 100%)"></div>
<div class="a" style="left:584.0px;top:320px;width:2.5px;height:2.5px;background:#b4b2ae"></div>
<div class="a" style="left:588.4px;top:320px;width:2.5px;height:2.5px;background:#b4b2ae"></div>
<div class="a" style="left:592.8px;top:320px;width:2.5px;height:2.5px;background:#b4b2ae"></div>
<div class="a" style="left:597.2px;top:320px;width:2.5px;height:2.5px;background:#b4b2ae"></div>
<svg class="a" style="left:560px;top:313px" width="42" height="18"><path d="M40.5,0 V10.5 H17 L6,16.5" stroke="#4a4843" stroke-width="1" fill="none"/></svg>
<div class="a" style="left:510px;top:330px;width:77px;height:19px;border:1px solid #53514c"></div>
<div class="t" style="left:512px;top:332px;font-family:'Liberation Sans';font-size:9.8px;font-weight:bold;letter-spacing:0px;color:#64625c;transform-origin:0 0;transform:scaleX(0.959);">RANGE SLIDER</div>
<div class="a" style="left:512px;top:344px;width:40px;height:1px;background:repeating-linear-gradient(90deg,#45433e 0 2px,transparent 2px 3px)"></div>
<div class="a" style="left:490px;top:376px;width:114px;height:107px;background:#3a3933"></div>
<div class="a" style="left:502px;top:385px;width:91px;height:91px;border:1px solid #7e7c77"></div>
<svg class="a" style="left:503px;top:386px" width="89" height="89"><polygon points="4,0 89,0 89,58" fill="#2e2d28" opacity="0.35"/></svg>
<svg class="a" style="left:510px;top:394px" width="76" height="70"><g fill="#a3a19c" stroke="#a3a19c" stroke-width="1" stroke-linejoin="round"><polygon points="37.5,3.5 50.5,16 49,19.5 26,19.5 24.5,16"/><polygon points="37.5,64.5 50.5,52 49,49 26,49 24.5,52"/><polygon points="3.5,35 19,21.5 20,23.5 20,46.5 19,48.5"/><polygon points="71.5,35 56,21.5 55,23.5 55,46.5 56,48.5"/></g><g stroke="#111" stroke-width="1.9" fill="none"><path d="M34,10.5 L37.5,7 L41,10.5 M34,15.5 L37.5,12 L41,15.5"/><path d="M34,53.5 L37.5,57 L41,53.5 M34,58.5 L37.5,62 L41,58.5"/><path d="M11.5,31.5 L8,35 L11.5,38.5 M16.5,31.5 L13,35 L16.5,38.5"/><path d="M58.5,31.5 L62,35 L58.5,38.5 M63.5,31.5 L67,35 L63.5,38.5"/></g></svg>
<svg class="a" style="left:0;top:0;overflow:visible" width="1" height="1"><path d="M535.00,426.00h5.00v1.00h-5.00zM535.00,427.00h1.00v1.00h-1.00zM539.00,427.00h1.00v1.00h-1.00zM535.00,428.00h5.00v1.00h-5.00zM535.00,429.00h1.00v1.00h-1.00zM535.00,430.00h1.00v1.00h-1.00zM543.00,426.00h4.00v1.00h-4.00zM542.00,427.00h1.00v1.00h-1.00zM546.00,427.00h1.00v1.00h-1.00zM542.00,428.00h5.00v1.00h-5.00zM542.00,429.00h1.00v1.00h-1.00zM546.00,429.00h1.00v1.00h-1.00zM542.00,430.00h1.00v1.00h-1.00zM546.00,430.00h1.00v1.00h-1.00zM549.00,426.00h5.00v1.00h-5.00zM549.00,427.00h1.00v1.00h-1.00zM549.00,428.00h1.00v1.00h-1.00zM551.00,428.00h3.00v1.00h-3.00zM549.00,429.00h1.00v1.00h-1.00zM553.00,429.00h1.00v1.00h-1.00zM549.00,430.00h5.00v1.00h-5.00zM556.00,426.00h5.00v1.00h-5.00zM556.00,427.00h1.00v1.00h-1.00zM556.00,428.00h4.00v1.00h-4.00zM556.00,429.00h1.00v1.00h-1.00zM556.00,430.00h5.00v1.00h-5.00z" fill="#f6f6f6" opacity="1.0"/></svg>
<svg class="a" style="left:166px;top:159px" width="17" height="17"><polygon points="12.4,1 16.6,1 16.6,16 0.8,16 0.8,12.7" fill="#a6a4a0"/></svg>
<div class="t" style="left:176px;top:165px;font-family:'Liberation Sans';font-size:8.5px;font-weight:bold;letter-spacing:-2.0px;color:#0a0a0a;">1</div>
<svg class="a" style="left:442px;top:428px" width="17" height="17"><polygon points="0,0 16.3,0 16.3,1.6 4.7,15.6 0,15.6" fill="#a6a4a0"/></svg>
<div class="t" style="left:445px;top:429px;font-family:'Liberation Sans';font-size:8.5px;font-weight:normal;letter-spacing:-1.0px;color:#0a0a0a;-webkit-text-stroke:0.3px #0a0a0a">64</div></body></html>
